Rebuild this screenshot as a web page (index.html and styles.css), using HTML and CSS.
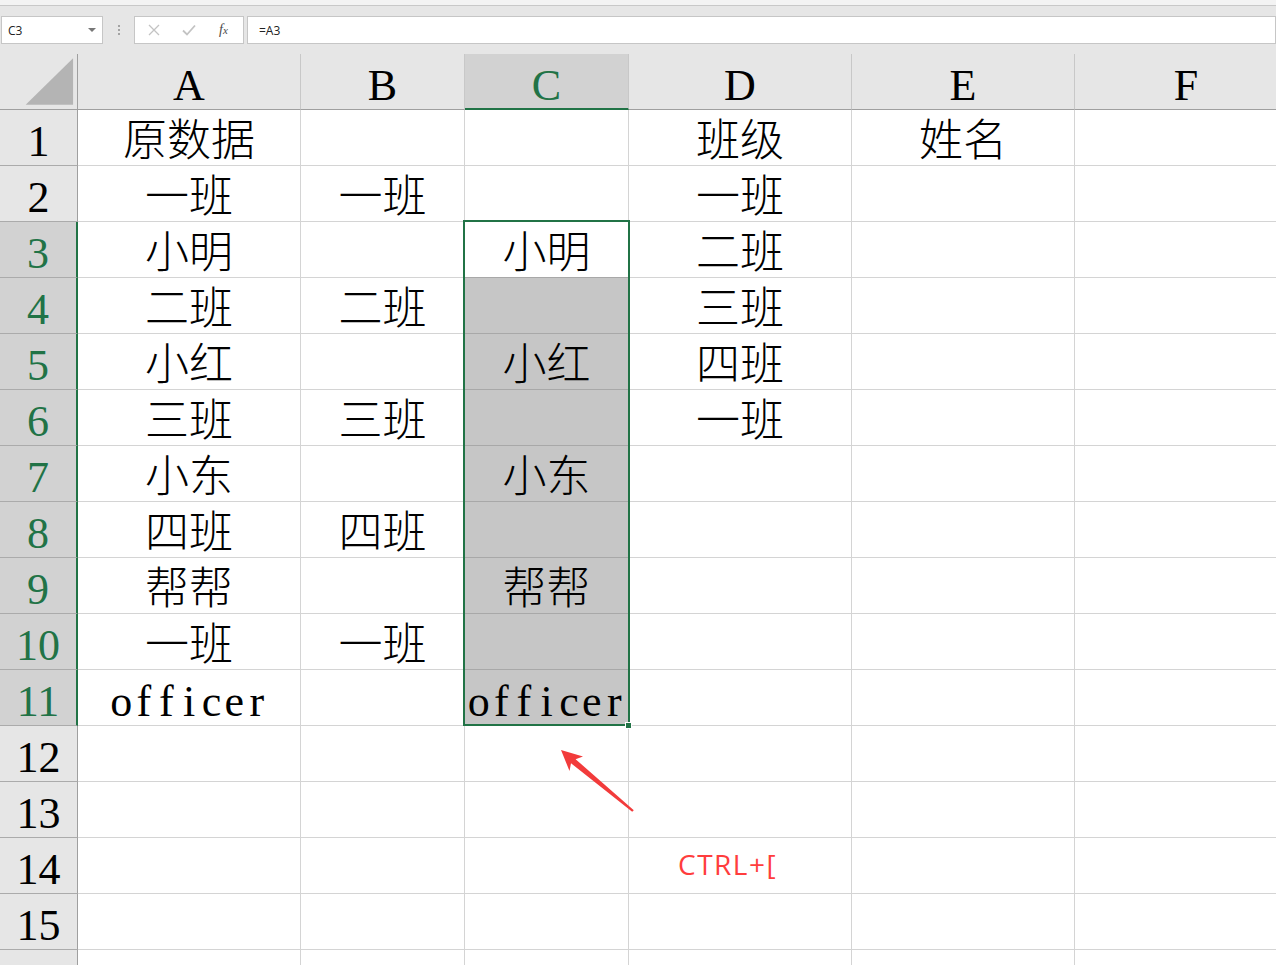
FILE: index.html
```html
<!DOCTYPE html>
<html lang="zh-CN">
<head>
<meta charset="utf-8">
<title>Sheet</title>
<link rel="stylesheet" href="styles.css">
</head>
<body>
<div class="app">
  <div class="ribbon-edge"></div>
  <div class="fbar">
    <div class="namebox"><span class="nb-text">C3</span><span class="dd"></span></div>
    <div class="grip"><i></i><i></i><i></i></div>
    <div class="btns">
      <svg class="ico" width="14" height="14" viewBox="0 0 14 14"><path d="M2 2 L12 12 M12 2 L2 12" stroke="#c3c3c3" stroke-width="1.3" fill="none"/></svg>
      <svg class="ico" width="16" height="14" viewBox="0 0 16 14"><path d="M2 7.5 L6 11.5 L14 2.5" stroke="#c3c3c3" stroke-width="1.8" fill="none"/></svg>
      <span class="fx">f<span class="fx-x">x</span></span>
    </div>
    <div class="formula">=A3</div>
  </div>

  <div class="sheet">
    <div class="grid">
      <div class="cell corner"><svg width="78" height="55" viewBox="0 0 78 55"><polygon points="74,4 74,51 26,51" fill="#b4b4b4"/></svg></div>
      <div class="cell ch">A</div>
      <div class="cell ch">B</div>
      <div class="cell ch hsel">C</div>
      <div class="cell ch">D</div>
      <div class="cell ch">E</div>
      <div class="cell ch">F</div>

      <div class="cell rh">1</div>
      <div class="cell">原数据</div><div class="cell"></div><div class="cell"></div><div class="cell">班级</div><div class="cell">姓名</div><div class="cell"></div>

      <div class="cell rh">2</div>
      <div class="cell">一班</div><div class="cell">一班</div><div class="cell"></div><div class="cell">一班</div><div class="cell"></div><div class="cell"></div>

      <div class="cell rh rsel">3</div>
      <div class="cell">小明</div><div class="cell"></div><div class="cell act">小明</div><div class="cell">二班</div><div class="cell"></div><div class="cell"></div>

      <div class="cell rh rsel">4</div>
      <div class="cell">二班</div><div class="cell">二班</div><div class="cell gsel"></div><div class="cell">三班</div><div class="cell"></div><div class="cell"></div>

      <div class="cell rh rsel">5</div>
      <div class="cell">小红</div><div class="cell"></div><div class="cell gsel">小红</div><div class="cell">四班</div><div class="cell"></div><div class="cell"></div>

      <div class="cell rh rsel">6</div>
      <div class="cell">三班</div><div class="cell">三班</div><div class="cell gsel"></div><div class="cell">一班</div><div class="cell"></div><div class="cell"></div>

      <div class="cell rh rsel">7</div>
      <div class="cell">小东</div><div class="cell"></div><div class="cell gsel">小东</div><div class="cell"></div><div class="cell"></div><div class="cell"></div>

      <div class="cell rh rsel">8</div>
      <div class="cell">四班</div><div class="cell">四班</div><div class="cell gsel"></div><div class="cell"></div><div class="cell"></div><div class="cell"></div>

      <div class="cell rh rsel">9</div>
      <div class="cell">帮帮</div><div class="cell"></div><div class="cell gsel">帮帮</div><div class="cell"></div><div class="cell"></div><div class="cell"></div>

      <div class="cell rh rsel">10</div>
      <div class="cell">一班</div><div class="cell">一班</div><div class="cell gsel"></div><div class="cell"></div><div class="cell"></div><div class="cell"></div>

      <div class="cell rh rsel">11</div>
      <div class="cell"><span class="mono"><span>o</span><span>f</span><span>f</span><span>i</span><span>c</span><span>e</span><span>r</span></span></div><div class="cell"></div><div class="cell gsel"><span class="mono"><span>o</span><span>f</span><span>f</span><span>i</span><span>c</span><span>e</span><span>r</span></span></div><div class="cell"></div><div class="cell"></div><div class="cell"></div>

      <div class="cell rh">12</div>
      <div class="cell"></div><div class="cell"></div><div class="cell"></div><div class="cell"></div><div class="cell"></div><div class="cell"></div>

      <div class="cell rh">13</div>
      <div class="cell"></div><div class="cell"></div><div class="cell"></div><div class="cell"></div><div class="cell"></div><div class="cell"></div>

      <div class="cell rh">14</div>
      <div class="cell"></div><div class="cell"></div><div class="cell"></div><div class="cell"></div><div class="cell"></div><div class="cell"></div>

      <div class="cell rh">15</div>
      <div class="cell"></div><div class="cell"></div><div class="cell"></div><div class="cell"></div><div class="cell"></div><div class="cell"></div>

      <div class="cell rh"></div>
      <div class="cell"></div><div class="cell"></div><div class="cell"></div><div class="cell"></div><div class="cell"></div><div class="cell"></div>
    </div>
    <div class="selbox"></div>
    <div class="handle"></div>
  </div>

  <svg class="arrow" width="1276" height="965" viewBox="0 0 1276 965">
    <polygon points="561,750 583,756.5 575.6,759.2 633.8,810.2 632.2,811.8 571,763.2 569.5,771" fill="#f23b3b"/>
  </svg>
  <div class="note">CTRL+[</div>
</div>
</body>
</html>
```

FILE: styles.css
```css
* { box-sizing: border-box; }
html, body { margin: 0; padding: 0; background: #ffffff; }
.app {
  position: relative;
  width: 1276px;
  height: 965px;
  overflow: hidden;
  font-family: "Liberation Serif", "Noto Sans CJK SC", serif;
}
.ribbon-edge {
  height: 6px;
  background: #f3f3f3;
  border-bottom: 1px solid #c8c8c8;
}
.fbar {
  height: 48px;
  background: #e6e6e6;
  display: flex;
  align-items: flex-start;
  padding-top: 10px;
  padding-left: 1px;
}
.namebox, .btns, .formula {
  height: 28px;
  background: #ffffff;
  border: 1px solid #c6c6c6;
  font-family: "Open Sans", "Noto Sans", sans-serif;
  font-size: 12px;
  color: #222;
}
.namebox {
  width: 102px;
  display: flex;
  align-items: center;
  justify-content: space-between;
  padding: 0 6px 0 6px;
}
.dd {
  width: 0; height: 0;
  border-left: 4px solid transparent;
  border-right: 4px solid transparent;
  border-top: 4px solid #777;
}
.grip {
  width: 31px;
  height: 28px;
  display: flex;
  flex-direction: column;
  align-items: center;
  justify-content: center;
  gap: 2px;
}
.grip i {
  display: block;
  width: 2px;
  height: 2px;
  background: #a3a3a3;
}
.btns {
  width: 110px;
  display: flex;
  align-items: center;
  padding-left: 12px;
  gap: 20px;
}
.ico { display: block; }
.fx {
  font-family: "Liberation Serif", serif;
  font-style: italic;
  font-size: 14px;
  color: #4a4a4a;
  margin-left: 2px;
}
.fx-x { font-size: 11px; }
.formula {
  flex: 1;
  margin-left: 3px;
  display: flex;
  align-items: center;
  padding-left: 11px;
}

.sheet { position: relative; }
.grid {
  display: grid;
  grid-template-columns: 78px 223px 164px 164px 223px 223px 223px;
  grid-auto-rows: 56px;
}
.cell {
  border-right: 1px solid #d4d4d4;
  border-bottom: 1px solid #d4d4d4;
  display: flex;
  align-items: flex-end;
  justify-content: center;
  padding-bottom: 1px;
  font-size: 44px;
  line-height: 44px;
  white-space: nowrap;
  color: #000;
  font-weight: 300;
}
.corner {
  background: #e6e6e6;
  border-right: 1px solid #9f9f9f;
  border-bottom: 1px solid #9f9f9f;
  padding: 0;
  align-items: stretch;
  justify-content: flex-start;
}
.corner svg { display: block; }
.ch {
  background: #e6e6e6;
  border-right: 1px solid #c8c8c8;
  border-bottom: 1px solid #9f9f9f;
}
.hsel {
  background: #d2d2d2;
  color: #217346;
  border-bottom: 2px solid #217346;
  padding-bottom: 0;
}
.rh {
  background: #e6e6e6;
  border-right: 1px solid #9f9f9f;
  border-bottom: 1px solid #ababab;
}
.rsel {
  background: #d2d2d2;
  color: #217346;
  border-right: 2px solid #217346;
}
.act { border-bottom-color: #a8a8a8; }
.gsel {
  background: #c6c6c6;
  border-bottom-color: #a8a8a8;
}
.mono { display: inline-flex; }
.mono span {
  display: inline-block;
  width: 22.6px;
  text-align: center;
  font-family: "Liberation Serif", serif;
}
.selbox {
  position: absolute;
  left: 463px;
  top: 166px;
  width: 167px;
  height: 506px;
  border: 2px solid #217346;
}
.handle {
  position: absolute;
  left: 625px;
  top: 668px;
  width: 7px;
  height: 7px;
  background: #217346;
  border: 1px solid #ffffff;
}
.arrow {
  position: absolute;
  left: 0;
  top: 0;
  pointer-events: none;
}
.note {
  position: absolute;
  left: 678px;
  top: 850px;
  font-family: "Open Sans", "Noto Sans", sans-serif;
  font-size: 28px;
  line-height: 28px;
  letter-spacing: 1.5px;
  color: #ff3d3d;
}
```
